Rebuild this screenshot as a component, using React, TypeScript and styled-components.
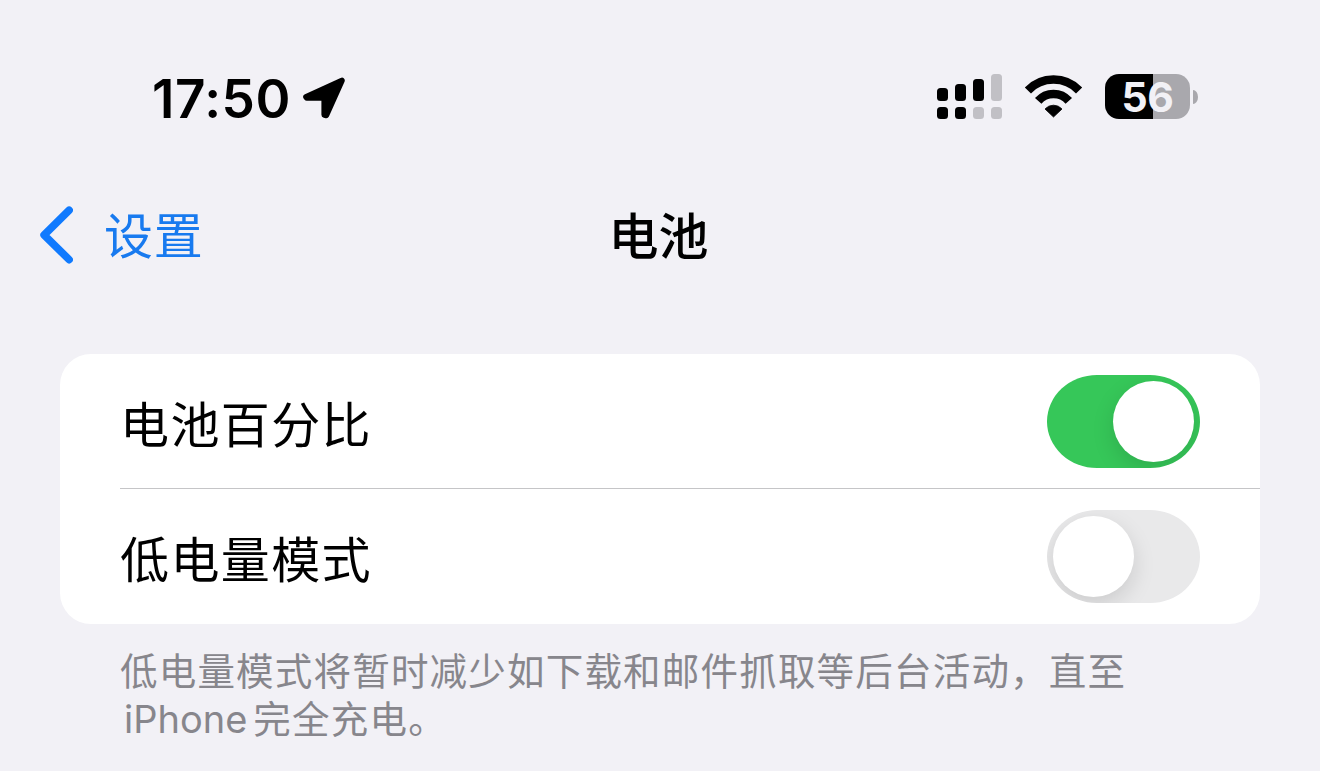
import styled, { createGlobalStyle } from 'styled-components';

const GlobalStyle = createGlobalStyle`
  body {
    margin: 0;
    background: #f2f1f6;
  }

  * {
    box-sizing: border-box;
  }
`;

export default function App() {
  return (
    <>
      <GlobalStyle />
      <Screen>
        <StatusBar>
          <StatusLeft>
            <Clock>17:50</Clock>
            <LocationIcon />
          </StatusLeft>
          <StatusRight>
            <SignalIcon />
            <WifiIcon />
            <Battery level={56} />
          </StatusRight>
        </StatusBar>

        <NavBar>
          <BackButton type="button">
            <ChevronIcon />
            <BackLabel>设置</BackLabel>
          </BackButton>
          <NavTitle>电池</NavTitle>
        </NavBar>

        <Card>
          <Row>
            <RowLabel>电池百分比</RowLabel>
            <Switch on label="电池百分比" />
          </Row>
          <Row>
            <RowLabel>低电量模式</RowLabel>
            <Switch on={false} label="低电量模式" />
          </Row>
        </Card>

        <Footnote>
          <FootnoteLine>低电量模式将暂时减少如下载和邮件抓取等后台活动，直至</FootnoteLine>
          <FootnoteLine>
            <Latin>iPhone</Latin>完全充电。
          </FootnoteLine>
        </Footnote>
      </Screen>
    </>
  );
}

function Switch({ on, label }: { on: boolean; label: string }) {
  return (
    <Track type="button" role="switch" aria-checked={on} aria-label={label} $on={on}>
      <Knob />
    </Track>
  );
}

function Battery({ level }: { level: number }) {
  return (
    <BatteryWrap>
      <BatteryBody $level={level}>{level}</BatteryBody>
      <BatteryTip />
    </BatteryWrap>
  );
}

function LocationIcon() {
  return (
    <svg width="42" height="42" viewBox="0 0 42 42" aria-hidden>
      <path
        d="M3.2 20 L38.8 3.6 L23.2 38.2 L21.4 37.8 L21.4 20.8 L3.8 20.8 Z"
        fill="#000"
        stroke="#000"
        strokeWidth="6"
        strokeLinejoin="round"
      />
    </svg>
  );
}

function SignalIcon() {
  return (
    <svg width="65" height="45" viewBox="0 0 65 45" aria-hidden>
      <rect x="0" y="14" width="11" height="13" rx="3.5" />
      <rect x="18" y="10" width="11" height="17" rx="3.5" />
      <rect x="36" y="5" width="11" height="22" rx="3.5" />
      <rect x="54" y="0" width="11" height="27" rx="3.5" fill="#c1c0c5" />
      <rect x="0" y="33" width="11" height="12" rx="3.5" />
      <rect x="18" y="33" width="11" height="12" rx="3.5" />
      <rect x="36" y="33" width="11" height="12" rx="3.5" fill="#c1c0c5" />
      <rect x="54" y="33" width="11" height="12" rx="3.5" fill="#c1c0c5" />
    </svg>
  );
}

function WifiIcon() {
  return (
    <svg width="57" height="43" viewBox="0 0 57 43" overflow="visible" aria-hidden>
      <g fill="none" stroke="#000" strokeWidth="8.6">
        <path d="M2.9 15.4 A35.6 35.6 0 0 1 54.1 15.4" />
        <path d="M13.2 25.9 A20.4 20.4 0 0 1 43.8 25.9" />
      </g>
      <path
        d="M20 34 A11.4 11.4 0 0 1 37 34 L28.5 42 Z"
        stroke="#000"
        strokeWidth="0.8"
        strokeLinejoin="round"
      />
    </svg>
  );
}

function ChevronIcon() {
  return (
    <svg width="34" height="58" viewBox="0 0 34 58" aria-hidden>
      <path
        d="M30.1 4.2 L5.1 29 L30.1 53.6"
        fill="none"
        stroke="#107afe"
        strokeWidth="7.6"
        strokeLinecap="round"
        strokeLinejoin="round"
      />
    </svg>
  );
}

const Screen = styled.main`
  display: flex;
  flex-direction: column;
  width: 1320px;
  height: 771px;
  overflow: hidden;
  background: #f2f1f6;
  color: #000;
  font-family: 'Noto Sans CJK SC', sans-serif;

  svg {
    display: block;
    flex: none;
  }
`;

const StatusBar = styled.header`
  display: flex;
  justify-content: space-between;
  align-items: flex-start;
  height: 169px;
  padding: 74px 122px 0 152px;
`;

const StatusLeft = styled.div`
  display: flex;
  align-items: center;
  gap: 14px;
  height: 48px;
`;

const Clock = styled.time`
  width: 137px;
  padding-top: 2px;
  font-family: Inter, sans-serif;
  font-size: 53px;
  font-weight: 600;
  line-height: 48px;
  letter-spacing: 0.5px;
  white-space: nowrap;
`;

const StatusRight = styled.div`
  display: flex;
  align-items: center;
  gap: 23px;
  height: 45px;
`;

const BatteryWrap = styled.div`
  display: flex;
  align-items: center;
  gap: 3px;
`;

const BatteryBody = styled.div<{ $level: number }>`
  width: 85px;
  height: 45px;
  border-radius: 14px;
  background: linear-gradient(
    to right,
    #000 ${({ $level }) => $level}%,
    #a9a8ad ${({ $level }) => $level}%
  );
  color: #f2f1f6;
  font-family: Inter, sans-serif;
  font-size: 41px;
  font-weight: 700;
  line-height: 46px;
  letter-spacing: -0.5px;
  text-align: center;
`;

const BatteryTip = styled.div`
  width: 5px;
  height: 14px;
  border-radius: 0 5px 5px 0 / 0 7px 7px 0;
  background: #a9a8ad;
`;

const NavBar = styled.nav`
  display: grid;
  grid-template-columns: 1fr auto 1fr;
  align-items: center;
  height: 132px;
  padding: 0 39px;
`;

const BackButton = styled.button`
  display: flex;
  align-items: center;
  justify-self: start;
  gap: 31px;
  padding: 0;
  border: 0;
  background: none;
  color: #187aef;
  font-family: inherit;
`;

const BackLabel = styled.span`
  padding-bottom: 5px;
  font-size: 49px;
  line-height: 58px;
  letter-spacing: 0.8px;
`;

const NavTitle = styled.h1`
  margin: 0;
  padding: 0 3px 5px 0;
  font-size: 50px;
  font-weight: 500;
  line-height: 58px;
`;

const Card = styled.section`
  margin: 53px 60px 0;
  border-radius: 31px;
  background: #fff;
`;

const Row = styled.div`
  display: flex;
  align-items: center;
  justify-content: space-between;
  height: 135px;
  margin-left: 60px;
  padding-right: 60px;

  & + & {
    box-shadow: 0 -1px 0 #c5c5c7;
  }
`;

const RowLabel = styled.span`
  font-size: 49px;
  line-height: 60px;
  letter-spacing: 1.4px;
`;

const Track = styled.button<{ $on: boolean }>`
  display: flex;
  align-items: center;
  justify-content: ${({ $on }) => ($on ? 'flex-end' : 'flex-start')};
  width: 153px;
  height: 93px;
  padding: 6px;
  border: 0;
  border-radius: 50px / 46.5px;
  background: ${({ $on }) => ($on ? '#36c759' : '#e9e9ea')};
  overflow: hidden;
`;

const Knob = styled.span`
  width: 81px;
  height: 81px;
  border-radius: 50%;
  background: #fff;
  box-shadow: 0 8px 22px rgba(0, 0, 0, 0.13);
`;

const Footnote = styled.p`
  margin: 21px 60px 0 120px;
  color: #87868c;
  font-size: 37.5px;
  line-height: 48px;
  letter-spacing: 1.2px;
`;

const FootnoteLine = styled.span`
  display: block;
  white-space: nowrap;
`;

const Latin = styled.span`
  margin: 0 6px 0 4px;
  font-family: Inter, sans-serif;
  font-size: 38px;
  letter-spacing: 0;
`;
